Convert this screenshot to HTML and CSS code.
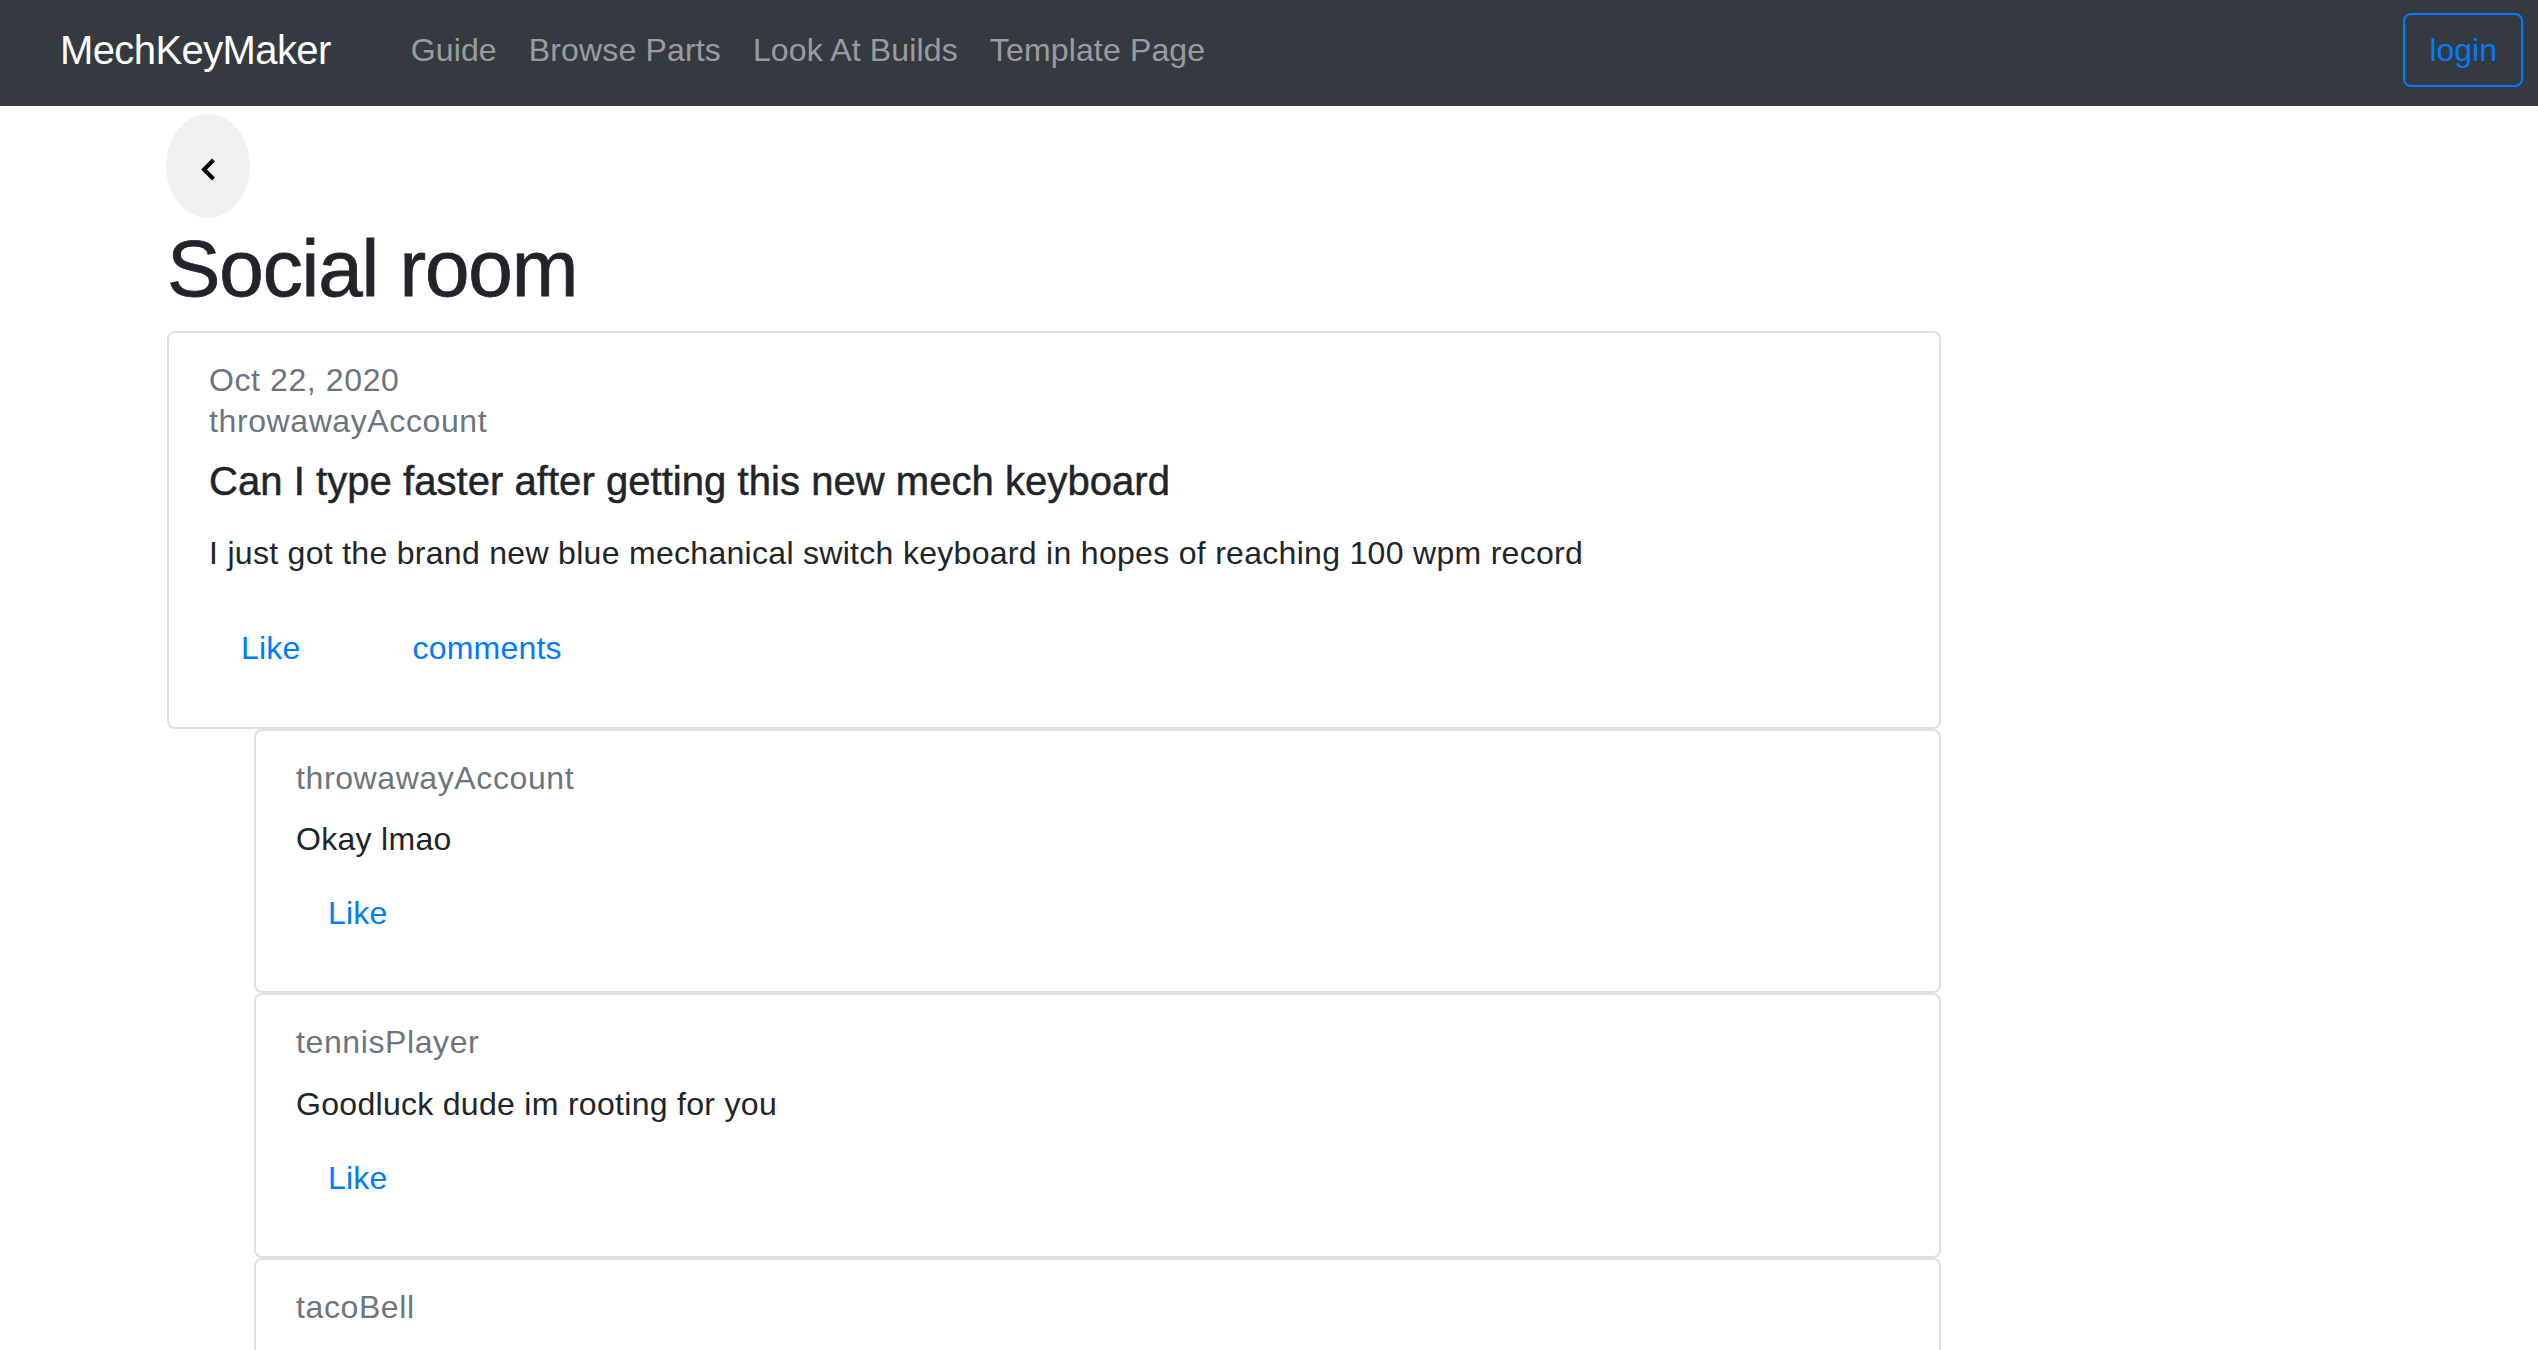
FILE: index.html
```html
<!DOCTYPE html>
<html lang="en">
<head>
<meta charset="utf-8">
<title>MechKeyMaker - Social room</title>
<link rel="stylesheet" href="styles.css">
</head>
<body>
<nav class="navbar">
  <a class="brand" href="#">MechKeyMaker</a>
  <ul class="nav-links">
    <li><a href="#">Guide</a></li>
    <li><a href="#">Browse Parts</a></li>
    <li><a href="#">Look At Builds</a></li>
    <li><a href="#">Template Page</a></li>
  </ul>
  <button class="btn-login" type="button">login</button>
</nav>
<main class="page">
  <button class="back" type="button" aria-label="Back">
    <svg class="chev" width="16" height="24" viewBox="0 0 16 24"><polyline points="13.5,2 4,11.5 13.5,21" fill="none" stroke="#000" stroke-width="4"/></svg>
  </button>
  <h1 class="title">Social room</h1>
  <article class="card post">
    <h6 class="subtitle date">Oct 22, 2020</h6>
    <h6 class="subtitle user">throwawayAccount</h6>
    <h5 class="post-title">Can I type faster after getting this new mech keyboard</h5>
    <p class="post-text">I just got the brand new blue mechanical switch keyboard in hopes of reaching 100 wpm record</p>
    <div class="actions">
      <button class="link like" type="button">Like</button>
      <button class="link comments-btn" type="button">comments</button>
    </div>
  </article>
  <section class="comments">
    <article class="card comment">
      <h6 class="subtitle">throwawayAccount</h6>
      <p class="comment-text">Okay lmao</p>
      <div class="actions"><button class="link like" type="button">Like</button></div>
    </article>
    <article class="card comment">
      <h6 class="subtitle">tennisPlayer</h6>
      <p class="comment-text">Goodluck dude im rooting for you</p>
      <div class="actions"><button class="link like" type="button">Like</button></div>
    </article>
    <article class="card comment">
      <h6 class="subtitle">tacoBell</h6>
      <div class="actions"><button class="link like" type="button">Like</button></div>
    </article>
  </section>
</main>
</body>
</html>
```
FILE: styles.css
```css
* { box-sizing: border-box; }
html, body { margin: 0; padding: 0; }
body {
  font-family: "Liberation Sans", Arial, sans-serif;
  font-size: 32px;
  line-height: 48px;
  color: #212529;
  background: #fff;
}
.navbar {
  display: flex;
  align-items: center;
  height: 106px;
  padding: 13px 15px 19px 60px;
  background: #343a40;
}
.brand {
  font-size: 40px;
  line-height: 60px;
  color: #fff;
  text-decoration: none;
  letter-spacing: -0.6px;
}
.nav-links {
  display: flex;
  list-style: none;
  margin: 0 0 0 64px;
  padding: 0;
}
.nav-links a {
  display: block;
  padding: 0 16px;
  line-height: 48px;
  color: rgba(255, 255, 255, 0.5);
  text-decoration: none;
  letter-spacing: 0.15px;
}
.btn-login {
  margin-left: auto;
  height: 74px;
  padding: 0 24px;
  border: 2px solid #007bff;
  border-radius: 8px;
  background: transparent;
  color: #007bff;
  font: inherit;
  line-height: 70px;
}
.page {
  margin-left: 167px;
  width: 1774px;
}
.back {
  display: flex;
  align-items: center;
  justify-content: center;
  width: 84px;
  height: 104px;
  margin: 8px 0 0 -1px;
  padding: 0;
  border: none;
  border-radius: 50%;
  background: #f1f1f1;
}
.chev { display: block; margin-top: 8px; }
.title {
  font-size: 80px;
  line-height: 96px;
  font-weight: 400;
  margin: 3px 0 14px;
  letter-spacing: -1.1px;
  -webkit-text-stroke: 0.8px #212529;
}
.card {
  background: #fff;
  border: 2px solid rgba(0, 0, 0, 0.125);
  border-radius: 8px;
  padding: 40px;
}
.post { padding-bottom: 43px; }
.subtitle {
  margin: -12px 0 0;
  font-size: 32px;
  line-height: 38.4px;
  font-weight: 400;
  color: #6c757d;
  letter-spacing: 0.6px;
}
.subtitle.user { margin-top: 3px; }
.post-title {
  margin: 16px 0 24px;
  font-size: 40px;
  line-height: 48px;
  font-weight: 400;
  letter-spacing: 0.05px;
  -webkit-text-stroke: 0.5px #212529;
}
.post-text { margin: 0 0 35px; letter-spacing: 0.3px; }
.actions { display: flex; }
.link {
  padding: 12px 24px;
  border: none;
  background: none;
  font: inherit;
  line-height: 48px;
  color: #007bff;
  letter-spacing: 0.2px;
}
.like { margin-left: 8px; }
.comments-btn { margin-left: 64px; }
.comments { margin-left: 87px; }
.comment { padding-bottom: 42px; }
.comment .subtitle { margin-bottom: 18px; }
.comment-text { margin: 0 0 14px; letter-spacing: 0.3px; }
```
